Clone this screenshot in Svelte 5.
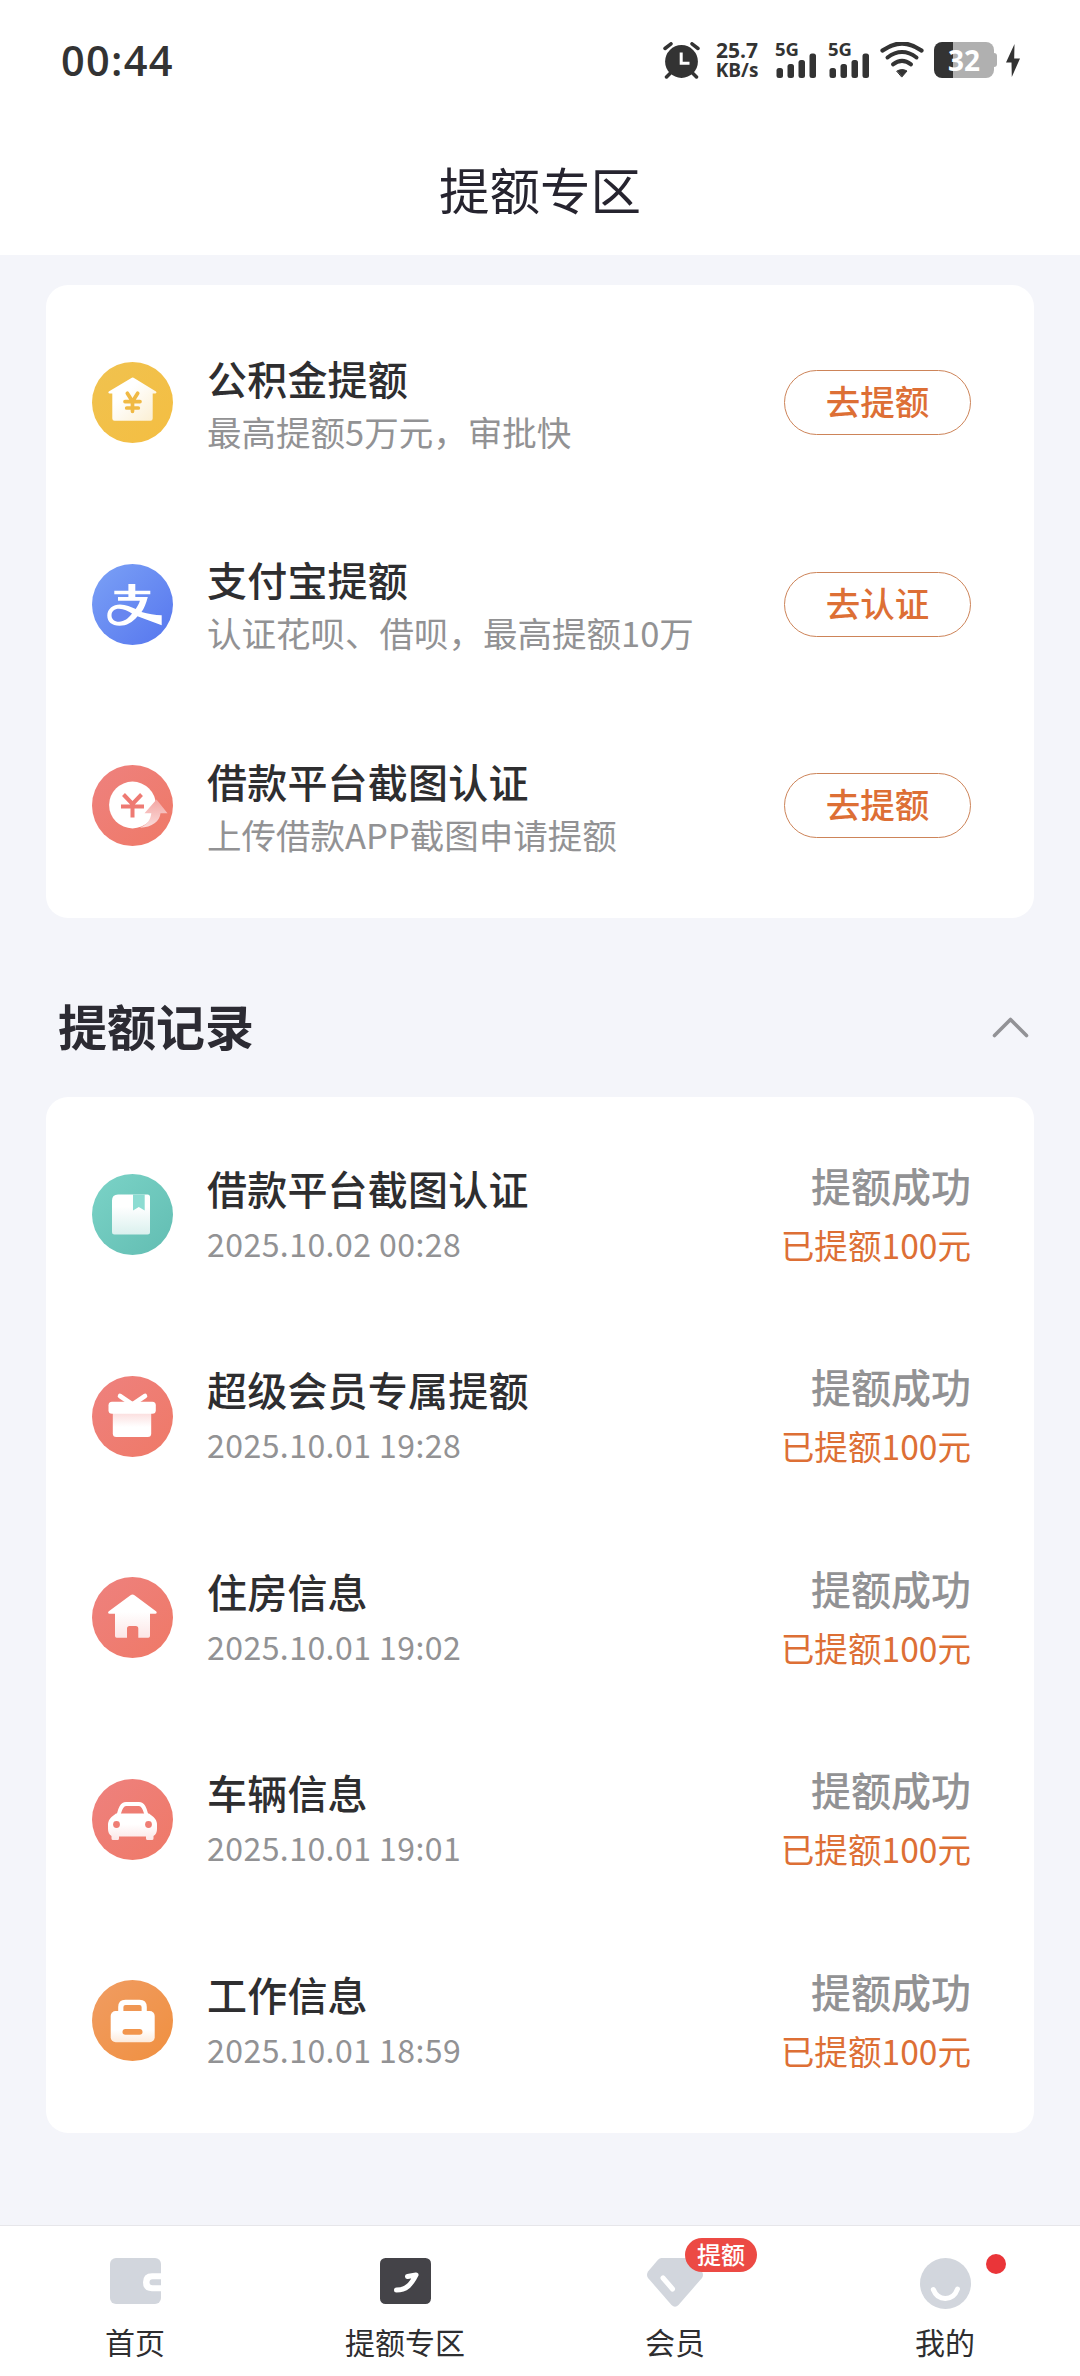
<script lang="ts">
  interface Task {
    icon: string;
    title: string;
    desc: string;
    action: string;
  }

  interface RecordItem {
    icon: string;
    title: string;
    time: string;
  }

  const tasks: Task[] = [
    { icon: 'fund', title: '公积金提额', desc: '最高提额5万元，审批快', action: '去提额' },
    { icon: 'alipay', title: '支付宝提额', desc: '认证花呗、借呗，最高提额10万', action: '去认证' },
    { icon: 'loan', title: '借款平台截图认证', desc: '上传借款APP截图申请提额', action: '去提额' },
  ];

  const records: RecordItem[] = [
    { icon: 'book', title: '借款平台截图认证', time: '2025.10.02 00:28' },
    { icon: 'gift', title: '超级会员专属提额', time: '2025.10.01 19:28' },
    { icon: 'house', title: '住房信息', time: '2025.10.01 19:02' },
    { icon: 'car', title: '车辆信息', time: '2025.10.01 19:01' },
    { icon: 'work', title: '工作信息', time: '2025.10.01 18:59' },
  ];

  const tabs = ['首页', '提额专区', '会员', '我的'];

  let open = $state(true);
  let active = $state(1);
</script>

{#snippet signal()}
  <div class="signal">
    <span>5G</span>
    <svg width="42" height="36" viewBox="0 0 42 36" fill="#333">
      <rect x="1.5" y="26" width="6.5" height="10" rx="2.5" />
      <rect x="12.5" y="22" width="6.5" height="14" rx="2.5" />
      <rect x="23.5" y="18" width="6.5" height="18" rx="2.5" />
      <rect x="34.5" y="11.5" width="6.5" height="24.5" rx="2.5" />
    </svg>
  </div>
{/snippet}

{#snippet rowIcon(name: string)}
  <svg class="row-icon" viewBox="0 0 81 81">
    {#if name === 'fund'}
      <circle cx="40.5" cy="40.5" r="40.5" fill="url(#g-yellow)" />
      <path d="M39 16.2q1.7-1.2 3.4 0L64 29.6q1.2 1.6-.8 1.9H60.7V56.5q0 2.2-2.2 2.2H22.5q-2.2 0-2.2-2.2V31.5H17.6q-2-.3-.8-1.9z" fill="url(#w-cream)" />
      <g stroke="#f0b944" stroke-width="3.7" stroke-linecap="round" fill="none">
        <path d="M35.3 31.2l5.2 8.3 5.2-8.3M40.5 39.5V49.3M33 39.6H48M34.7 46H46.3" />
      </g>
    {:else if name === 'alipay'}
      <circle cx="40.5" cy="40.5" r="40.5" fill="url(#g-blue)" />
      <path d="M22.3 26.7H36.4V20H43.3V26.7H58.3V30.300H43.300V33H55.800C54 40 52 44.500 49.500 48C56 50 63 50.900 69.700 51.300V61.300L45.500 52.300C40.500 58.500 34.500 61.800 27.500 61.800C19.500 61.800 15.300 57.500 15.300 51.500C15.300 45 21 40.500 28 40.500C34 40.500 39 43 43.700 45C45.500 42.500 47 40 47.900 36.800H26V33H36.400V30.300H22.300Z" fill="#fff" />
      <path d="M40 49.600C36 47 32 44.800 27 44.800C22.500 44.800 19.500 47.500 19.500 51.200C19.500 55.300 22.300 57.700 27 57.700C32 57.700 36.500 54.500 40 49.600Z" fill="#6886f0" />
    {:else if name === 'loan'}
      <circle cx="40.5" cy="40.5" r="40.5" fill="url(#g-red)" />
      <circle cx="40.5" cy="40" r="23.4" fill="#fff" />
      <path d="M31.5 29.5l9 9.5 9-9.5M40.5 39V52.5M29 41.5H52" fill="none" stroke="#ee7a73" stroke-width="4" />
      <path d="M64.5 34.5L75.5 48.3H68.5C68 56 60 62.5 48 62.8C54.5 60 58.5 55.5 59.3 48.3H52.5Z" fill="url(#g-arrow)" />
    {:else if name === 'book'}
      <circle cx="40.5" cy="40.5" r="40.5" fill="url(#g-teal)" />
      <path d="M26 20.5H55.5q2.5 0 2.5 2.5V58q0 2.500-2.500 2.500H22.500q-2.500 0-2.500-2.500V26.500q0-6 6-6z" fill="url(#w-teal)" />
      <path d="M41 20.500H52.700V36.500L46.800 33 41 36.500z" fill="#8cdcd2" />
    {:else if name === 'gift'}
      <circle cx="40.5" cy="40.5" r="40.5" fill="url(#g-red)" />
      <path d="M28 20L40.500 28.500 53 20" fill="none" stroke="#fff" stroke-width="4.600" stroke-linecap="round" />
      <path d="M20.800 36H59.200V57.500q0 3.500-3.500 3.500H24.300q-3.500 0-3.500-3.500z" fill="url(#w-pink-top)" />
      <rect x="16.500" y="25.700" width="47.300" height="12" rx="3.500" fill="#fff" />
    {:else if name === 'house'}
      <circle cx="40.5" cy="40.5" r="40.5" fill="url(#g-red)" />
      <path d="M38.500 18.200q2-1.500 4 0L64.300 34.500q1.200 2-1 2.300H58V59q0 1.700-1.700 1.700H46.300V51.500q0-2.500-2.500-2.500H37.500q-2.500 0-2.500 2.500V60.700H24.700Q23 60.700 23 59V36.800H17.500q-2.200-.3-1-2.300z" fill="url(#w-pink)" />
    {:else if name === 'car'}
      <circle cx="40.5" cy="40.5" r="40.5" fill="url(#g-red)" />
      <path d="M26.500 36C28 31 29 25 34 25H47C52 25 53 31 54.500 36" fill="none" stroke="#fff" stroke-width="3.800" />
      <path d="M24 34.500H57L61.500 38Q65 41 65 46V50Q65 55 61.500 57V59.500Q61.500 61 60 61H55.500Q54 61 54 59.500V57.500H27V59.500Q27 61 25.500 61H21Q19.500 61 19.500 59.500V57Q16 55 16 50V46Q16 41 19.500 38Z" fill="url(#w-pink)" />
      <circle cx="24.500" cy="45.500" r="3.400" fill="#ef7d74" />
      <circle cx="56.500" cy="45.500" r="3.400" fill="#ef7d74" />
    {:else if name === 'work'}
      <circle cx="40.5" cy="40.5" r="40.5" fill="url(#g-orange)" />
      <path d="M28.800 33V27q0-4.700 4.700-4.700H47.500q4.700 0 4.700 4.700V33" fill="none" stroke="#fff" stroke-width="5.200" />
      <rect x="18.700" y="31" width="44" height="31.300" rx="5" fill="url(#w-orange)" />
      <rect x="30.500" y="49" width="20" height="5.800" rx="2.900" fill="#f2954c" />
    {/if}
  </svg>
{/snippet}

<!-- shared gradients for the round icons -->
<svg class="defs" width="0" height="0">
  <defs>
    <linearGradient id="g-yellow" x1="0" y1="0" x2="1" y2="1"><stop stop-color="#f0c24f" /><stop offset="1" stop-color="#f4be42" /></linearGradient>
    <linearGradient id="g-blue" x1="0" y1="0" x2="1" y2="1"><stop stop-color="#7ba1f6" /><stop offset="1" stop-color="#5676ee" /></linearGradient>
    <linearGradient id="g-red" x1="0" y1="0" x2="1" y2="1"><stop stop-color="#ee817e" /><stop offset="1" stop-color="#ef7967" /></linearGradient>
    <linearGradient id="g-teal" x1="0" y1="0" x2="1" y2="1"><stop stop-color="#7bd3c7" /><stop offset="1" stop-color="#62bdb2" /></linearGradient>
    <linearGradient id="g-orange" x1="0" y1="0" x2="1" y2="1"><stop stop-color="#f09c62" /><stop offset="1" stop-color="#f09040" /></linearGradient>
    <linearGradient id="g-arrow" x1="0" y1="0" x2="0" y2="1"><stop stop-color="#f3a6a3" /><stop offset="1" stop-color="#fadcdb" /></linearGradient>
    <linearGradient id="w-cream" x1="0" y1="0" x2="1" y2="1"><stop offset=".35" stop-color="#fff" /><stop offset="1" stop-color="#fbeed0" /></linearGradient>
    <linearGradient id="w-teal" x1="0" y1="0" x2="0" y2="1"><stop offset=".3" stop-color="#fff" /><stop offset="1" stop-color="#daf0ee" /></linearGradient>
    <linearGradient id="w-pink" x1="0" y1="0" x2="0" y2="1"><stop offset=".4" stop-color="#fff" /><stop offset="1" stop-color="#fce6e6" /></linearGradient>
    <linearGradient id="w-pink-top" x1="0" y1="0" x2="0" y2="1"><stop stop-color="#fbdcdc" /><stop offset=".6" stop-color="#fff" /></linearGradient>
    <linearGradient id="w-orange" x1="0" y1="0" x2="0" y2="1"><stop offset=".6" stop-color="#fff" /><stop offset="1" stop-color="#fdeadb" /></linearGradient>
  </defs>
</svg>

<div class="page">
  <header class="status">
    <span class="clock">00:44</span>
    <div class="status-icons">
      <svg class="alarm" width="37" height="37" viewBox="0 0 37 37">
        <path d="M2 6.500L8 1.800M35 6.500L29 1.800M7.500 31l-4 4M29.500 31l4 4" stroke="#333" stroke-width="3.500" stroke-linecap="round" />
        <circle cx="18.500" cy="19.500" r="16.400" fill="#333" />
        <path d="M18.200 10.500V21.300H26.500" fill="none" stroke="#fff" stroke-width="3" />
      </svg>
      <div class="speed"><span class="num">25.7</span><span class="unit">KB/s</span></div>
      {@render signal()}
      {@render signal()}
      <svg class="wifi" width="44" height="36" viewBox="0 0 44 36" fill="none" stroke="#333" stroke-linecap="round">
        <path d="M2.500 8.500Q22-5.500 41.500 8.500" stroke-width="4.200" />
        <path d="M7.500 15.500Q22 4.500 36.500 15.500" stroke-width="4" />
        <path d="M13 22.300Q22 15.500 31 22.300" stroke-width="4" />
        <path d="M17 29Q22 26 27 29L22 34.800Z" fill="#333" stroke-width="1" stroke-linejoin="round" />
      </svg>
      <div class="battery">
        <span>32</span>
      </div>
      <svg class="bolt" width="14" height="33" viewBox="0 0 14 33"><path d="M8.500 0L0 18.500H5.500L5.800 33 14 14.500H8.200Z" fill="#333" /></svg>
    </div>
  </header>

  <h1>提额专区</h1>

  <main>
    <section class="card">
      {#each tasks as task}
        <div class="row">
          {@render rowIcon(task.icon)}
          <div class="info">
            <div class="title">{task.title}</div>
            <div class="desc">{task.desc}</div>
          </div>
          <button class="action">{task.action}</button>
        </div>
      {/each}
    </section>

    <div class="section-head">
      <h2>提额记录</h2>
      <button class="toggle" aria-label="toggle" onclick={() => (open = !open)}>
        <svg class:closed={!open} width="37" height="22" viewBox="0 0 37 22">
          <path d="M2.500 19.500L18.500 3.500 34.500 19.500" fill="none" stroke="#929296" stroke-width="3.600" stroke-linecap="round" stroke-linejoin="round" />
        </svg>
      </button>
    </div>

    {#if open}
      <section class="card">
        {#each records as item}
          <div class="row">
            {@render rowIcon(item.icon)}
            <div class="info">
              <div class="title">{item.title}</div>
              <div class="time">{item.time}</div>
            </div>
            <div class="result">
              <div class="state">提额成功</div>
              <div class="amount">已提额100元</div>
            </div>
          </div>
        {/each}
      </section>
    {/if}
  </main>

  <nav>
    {#each tabs as tab, i}
      <button class="tab" aria-pressed={active === i} onclick={() => (active = i)}>
        <span class="tab-icon">
          {#if i === 0}
            <svg width="51" height="46" viewBox="0 0 51 46">
              <rect width="51" height="46" rx="6" fill="#d2d6dd" />
              <path d="M51 15.200H42Q33 15.200 33 24.200T42 33.200H51V27.300H42.500Q39.500 27.300 39.500 24.300T42.500 21.300H51Z" fill="#fff" />
            </svg>
          {:else if i === 1}
            <svg width="51" height="46" viewBox="0 0 51 46">
              <rect width="51" height="46" rx="5.500" fill="#444348" />
              <path d="M16.500 32C26 32 31 27 36 17L27.500 18.500" fill="none" stroke="#fff" stroke-width="5" stroke-linecap="round" stroke-linejoin="round" />
            </svg>
          {:else if i === 2}
            <svg width="56" height="50" viewBox="0 0 56 50">
              <path d="M14.500 0H41.500Q43.500 0 45 1.700L55 13.500Q57 17 55 20L31.500 47Q28 50.500 24.500 47L1 20Q-1 17 1 13.500L11 1.700Q12.500 0 14.500 0Z" fill="#d2d6dd" />
              <path d="M16 20L25.500 31" stroke="#fff" stroke-width="5" stroke-linecap="round" />
            </svg>
            <span class="badge">提额</span>
          {:else}
            <svg width="51" height="51" viewBox="0 0 51 51">
              <circle cx="25.500" cy="25.500" r="25.500" fill="#d2d6dd" />
              <path d="M13.300 31.500C18 43.500 33 43.500 37.500 31" fill="none" stroke="#fff" stroke-width="5" stroke-linecap="round" />
            </svg>
            <span class="dot"></span>
          {/if}
        </span>
        <span class="tab-label">{tab}</span>
      </button>
    {/each}
  </nav>
</div>

<style>
  :global(body) {
    margin: 0;
    background: #f4f5fa;
  }
  .defs { position: absolute; }
  .page {
    width: 1080px;
    height: 2376px;
    display: flex;
    flex-direction: column;
    background: #f4f5fa;
    font-family: "Noto Sans CJK SC", "Noto Sans", sans-serif;
    color: #2e2e30;
  }
  button {
    font: inherit;
    color: inherit;
    background: none;
    border: 0;
    padding: 0;
  }
  svg {
    display: block;
    flex: none;
  }

  .status {
    box-sizing: border-box;
    height: 120px;
    padding: 0 60px 0 61px;
    background: #fff;
    display: flex;
    justify-content: space-between;
    align-items: center;
    color: #333;
    font-family: "Open Sans", sans-serif;
  }
  .clock {
    font-size: 41.5px;
    font-weight: 600;
    letter-spacing: 1.3px;
    line-height: 56px;
    padding-bottom: 1px;
  }
  .status-icons {
    display: flex;
    align-items: center;
    height: 37px;
  }
  .speed {
    width: 44px;
    margin-left: 15px;
    display: flex;
    flex-direction: column;
    align-items: center;
    font-weight: 700;
    line-height: 20px;
  }
  .num { font-size: 21px; }
  .unit { font-size: 19px; }
  .signal {
    width: 42px;
    margin-left: 16px;
    display: grid;
  }
  .signal + .signal { margin-left: 11px; }
  .signal > * { grid-area: 1 / 1; }
  .signal span {
    font-size: 18.5px;
    font-weight: 700;
    line-height: 14px;
  }
  .wifi { margin-left: 10px; }
  .battery {
    position: relative;
    width: 60px;
    height: 36px;
    margin-left: 10px;
    border-radius: 8px;
    background: linear-gradient(90deg, #333 19px, #b0b0b0 19px);
    color: #fff;
    font-size: 28px;
    font-weight: 700;
    line-height: 36px;
    text-align: center;
  }
  .battery::after {
    content: "";
    position: absolute;
    left: 60px;
    top: 11px;
    width: 3px;
    height: 14px;
    border-radius: 0 3px 3px 0;
    background: #b0b0b0;
  }
  .bolt { margin-left: 12px; }

  h1 {
    margin: 0;
    height: 135px;
    background: #fff;
    color: #26242f;
    font-size: 50.5px;
    font-weight: 400;
    line-height: 136px;
    text-align: center;
  }

  main {
    flex: 1;
    padding: 30px 46px 0;
  }
  .card {
    background: #fff;
    border-radius: 22px;
    padding: 17px 63px 11px 46px;
  }
  .row {
    height: 201.6px;
    display: flex;
    align-items: center;
  }
  .row-icon {
    width: 81px;
    height: 81px;
  }
  .info {
    flex: 1;
    margin-left: 34px;
  }
  .title {
    font-size: 40px;
    font-weight: 500;
    line-height: 56px;
    letter-spacing: 0.2px;
  }
  .desc {
    font-size: 34.5px;
    line-height: 50px;
    color: #929294;
  }
  .time {
    font-size: 32px;
    line-height: 54px;
    color: #929294;
    letter-spacing: 0.45px;
  }
  .action {
    box-sizing: border-box;
    width: 187px;
    height: 65px;
    border: 1.5px solid #cd8459;
    border-radius: 33px;
    color: #dd6f35;
    font-size: 34.5px;
    font-weight: 500;
    line-height: 54px;
    padding-bottom: 5px;
  }
  .result {
    text-align: right;
  }
  .state {
    font-size: 40px;
    font-weight: 500;
    line-height: 60px;
    color: #929294;
  }
  .amount {
    font-size: 33.6px;
    line-height: 60px;
    color: #dd6f35;
  }

  .section-head {
    height: 179px;
    padding: 0 5px 0 12px;
    display: flex;
    align-items: center;
    justify-content: space-between;
  }
  h2 {
    margin: 0;
    padding-top: 35px;
    font-size: 49px;
    font-weight: 700;
    line-height: 70px;
    color: #2c2b33;
  }
  .toggle { padding-top: 40px; }
  .closed { transform: rotate(180deg); }

  nav {
    box-sizing: border-box;
    height: 151px;
    border-top: 1px solid #e6e6ea;
    background: #fff;
    display: flex;
  }
  .tab {
    flex: 1;
    padding-top: 32px;
    display: flex;
    flex-direction: column;
    align-items: center;
    justify-content: flex-start;
  }
  .tab-icon {
    position: relative;
    height: 52px;
    display: block;
  }
  .tab-label {
    margin-top: 9px;
    font-size: 30px;
    line-height: 44px;
  }
  .badge {
    position: absolute;
    left: 38px;
    top: -20px;
    width: 72px;
    height: 34px;
    border-radius: 17px;
    background: #ec4a44;
    color: #fff;
    font-size: 24px;
    font-weight: 500;
    line-height: 31px;
    text-align: center;
  }
  .dot {
    position: absolute;
    left: 66px;
    top: -4px;
    width: 20px;
    height: 20px;
    border-radius: 50%;
    background: #ea3539;
  }
</style>
